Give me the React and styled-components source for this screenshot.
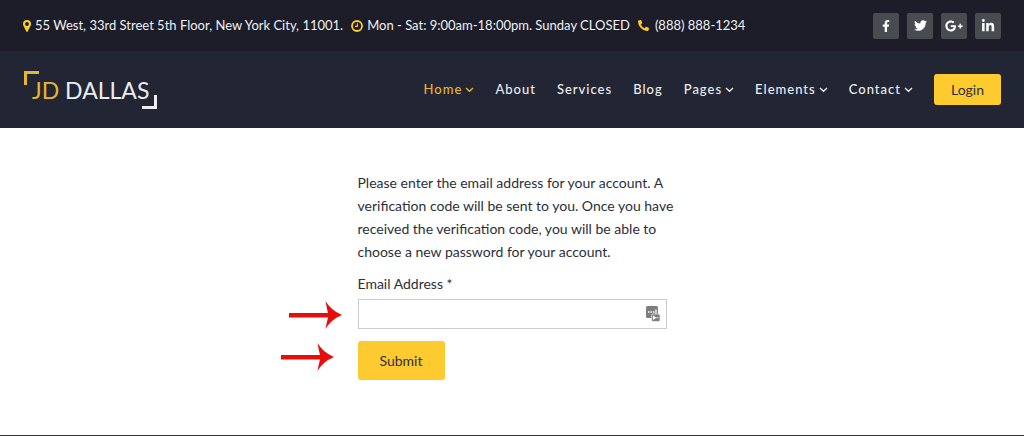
import React from "react";
import styled, { createGlobalStyle } from "styled-components";
import { FaPhoneAlt, FaFacebookF, FaTwitter, FaGooglePlusG, FaLinkedinIn } from "react-icons/fa";

const yellow = "#fdcb2f";

const GlobalStyle = createGlobalStyle`
  *, *::before, *::after { box-sizing: border-box; }
  body {
    margin: 0;
    background: #fff;
    color: #2b2f3a;
    font-family: Lato, "Liberation Sans", sans-serif;
    font-size: 14px;
    line-height: 23px;
  }
`;

const Page = styled.div`
  min-height: 100vh;
  display: flex;
  flex-direction: column;
`;

const TopBar = styled.div`
  display: flex;
  align-items: center;
  justify-content: space-between;
  min-height: 51px;
  padding: 0 23px;
  background: #1c1d28;
  color: #f0f0f2;
  font-size: 13px;
`;

const ContactList = styled.ul`
  display: flex;
  gap: 8px;
  margin: 0;
  padding: 0;
  list-style: none;
`;

const ContactItem = styled.li`
  display: flex;
  align-items: center;
  gap: ${(p) => p.$gap || 4}px;
  white-space: nowrap;
  svg { color: ${yellow}; flex: none; }
`;

const SocialList = styled.div`
  display: flex;
  gap: 8px;
`;

const SocialLink = styled.a`
  display: flex;
  align-items: center;
  justify-content: center;
  width: 26px;
  height: 26px;
  border-radius: 2px;
  background: #484b4f;
  color: #fff;
`;

const NavBar = styled.header`
  display: flex;
  align-items: center;
  justify-content: space-between;
  min-height: 77px;
  padding: 0 23px;
  background: #222533;
`;

const Logo = styled.a`
  position: relative;
  padding: 4px 8px 4px 9px;
  color: #ececf1;
  font-size: 23px;
  line-height: 30px;
  text-decoration: none;
  white-space: nowrap;
  span { color: #e5b62f; }
  &::before, &::after {
    content: "";
    position: absolute;
    width: 15px;
    height: 14px;
  }
  &::before {
    top: 0;
    left: 1px;
    border-top: 3px solid #e5b62f;
    border-left: 3px solid #e5b62f;
  }
  &::after {
    right: 0;
    bottom: 0;
    border-right: 3px solid #ececf1;
    border-bottom: 3px solid #ececf1;
  }
`;

const Nav = styled.nav`
  display: flex;
  align-items: center;
  gap: 21px;
`;

const NavLink = styled.a`
  display: flex;
  align-items: center;
  gap: 3px;
  color: ${(p) => (p.$active ? "#e5b62f" : "#ececf1")};
  font-size: 13px;
  font-weight: 500;
  letter-spacing: 1px;
  text-decoration: none;
`;

const Button = styled.button`
  padding: ${(p) => (p.$large ? "8px 22px" : "4px 17px")};
  border: 0;
  border-radius: 3px;
  background: ${yellow};
  color: #2b2f3a;
  font: inherit;
  cursor: pointer;
`;

const Main = styled.main`
  flex: 1;
  padding: 43px 23px;
`;

const ResetForm = styled.form`
  max-width: 309px;
  margin: 0 auto;
`;

const Intro = styled.p`
  margin: 0 0 9px;
  white-space: nowrap;
`;

const Label = styled.label`
  display: block;
  margin-bottom: 4px;
`;

const FormRow = styled.div`
  position: relative;
  display: flex;
  margin-bottom: 12px;
`;

const Input = styled.input`
  width: 100%;
  height: 30px;
  padding: 4px 28px 4px 8px;
  border: 1px solid #ccc;
  background: #fff;
  color: inherit;
  font: inherit;
`;

const FieldIcon = styled.svg`
  position: absolute;
  top: 7px;
  right: 6px;
`;

const Pointer = styled.svg`
  position: absolute;
  top: 2px;
  right: 100%;
  margin-right: ${(p) => p.$space}px;
`;

const Footer = styled.footer`
  border-top: 1px solid #33343a;
`;

const Marker = () => (
  <svg width="8" height="12" viewBox="0 0 8 12" fill="currentColor" aria-hidden="true">
    <path fillRule="evenodd" d="M4 0a4 4 0 0 1 4 4c0 .7-.1 1.100-.4 1.700L4.700 11.600a.8.8 0 0 1-1.400 0L.4 5.700C.1 5.100 0 4.700 0 4a4 4 0 0 1 4-4zM4 2.100a1.900 1.900 0 1 0 0 3.800 1.900 1.900 0 0 0 0-3.800z" />
  </svg>
);

const Clock = () => (
  <svg width="12" height="12" viewBox="0 0 12 12" fill="none" stroke="currentColor" aria-hidden="true">
    <circle cx="6" cy="6" r="5" strokeWidth="1.8" />
    <path d="M6.4 3.2v3.2H4" strokeWidth="1.1" />
  </svg>
);

const Chevron = () => (
  <svg width="9" height="6" viewBox="0 0 9 6" fill="none" stroke="currentColor" strokeWidth="1.4" aria-hidden="true">
    <path d="M1 1l3.500 3.300L8 1" />
  </svg>
);

const Arrow = ({ space }) => (
  <Pointer $space={space} width="53" height="28" viewBox="0 0 53 28" fill="#e80d0d" aria-hidden="true">
    <path d="M0 12h39Q37.500 6 36.500 0Q42 9.500 53 14Q42 18.500 36.500 28Q37.500 22 39 16.500H0z" />
  </Pointer>
);

const menu = [
  { label: "Home", sub: true, active: true },
  { label: "About" },
  { label: "Services" },
  { label: "Blog" },
  { label: "Pages", sub: true },
  { label: "Elements", sub: true },
  { label: "Contact", sub: true },
];

const social = [
  { name: "Facebook", Icon: FaFacebookF, size: 12 },
  { name: "Twitter", Icon: FaTwitter, size: 13 },
  { name: "Google Plus", Icon: FaGooglePlusG, size: 18 },
  { name: "LinkedIn", Icon: FaLinkedinIn, size: 14 },
];

export default function App() {
  return (
    <Page>
      <GlobalStyle />
      <TopBar>
        <ContactList>
          <ContactItem><Marker />55 West, 33rd Street 5th Floor, New York City, 11001.</ContactItem>
          <ContactItem><Clock />Mon - Sat: 9:00am-18:00pm. Sunday CLOSED</ContactItem>
          <ContactItem $gap={6}><FaPhoneAlt size={11} />(888) 888-1234</ContactItem>
        </ContactList>
        <SocialList>
          {social.map(({ name, Icon, size }) => (
            <SocialLink key={name} href="#" aria-label={name}><Icon size={size} /></SocialLink>
          ))}
        </SocialList>
      </TopBar>
      <NavBar>
        <Logo href="#"><span>JD</span> DALLAS</Logo>
        <Nav>
          {menu.map((item) => (
            <NavLink key={item.label} href="#" $active={item.active}>
              {item.label}
              {item.sub && <Chevron />}
            </NavLink>
          ))}
          <Button type="button">Login</Button>
        </Nav>
      </NavBar>
      <Main>
        <ResetForm>
          <Intro>
            Please enter the email address for your account. A<br />
            verification code will be sent to you. Once you have<br />
            received the verification code, you will be able to<br />
            choose a new password for your account.
          </Intro>
          <Label htmlFor="email">Email Address *</Label>
          <FormRow>
            <Arrow space={16} />
            <Input id="email" type="email" required />
            <FieldIcon width="15" height="16" viewBox="0 0 15 16" aria-hidden="true">
              <rect x="0" y="0" width="12" height="12" rx="1.5" fill="#7d7d7d" />
              <path d="M2 6h1.500M4.500 6H6M7 6h1.500M10 3.500v4" stroke="#fff" strokeWidth="1.3" />
              <rect x="5.500" y="8" width="8.500" height="7.500" rx="1.500" fill="#7d7d7d" stroke="#fff" strokeWidth=".6" />
              <path d="M7.300 10l2.500 1.700-2.500 1.700zM10.500 11.700h2" stroke="#fff" fill="#fff" strokeWidth=".9" />
            </FieldIcon>
          </FormRow>
          <FormRow>
            <Arrow space={24} />
            <Button type="submit" $large>Submit</Button>
          </FormRow>
        </ResetForm>
      </Main>
      <Footer />
    </Page>
  );
}
